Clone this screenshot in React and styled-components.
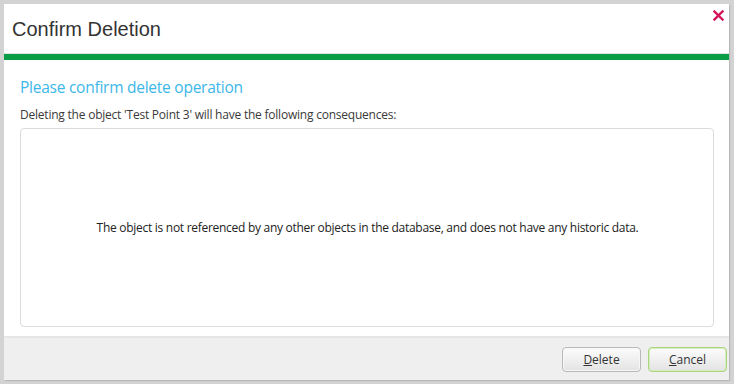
import React from "react";
import styled, { createGlobalStyle } from "styled-components";

const Global = createGlobalStyle`
  html, body { margin: 0; padding: 0; background: #d3d3d3; }
  body { width: 734px; height: 384px; overflow: hidden; }
  #root { padding: 4px 5px 4px 4px; box-sizing: border-box; height: 384px; }
`;

const Dialog = styled.div`
  height: 376px;
  background: #fff;
  display: flex;
  flex-direction: column;
  box-shadow: 1px 1px 1px rgba(0,0,0,0.12);
  font-family: "Open Sans", "Segoe UI", sans-serif;
`;

const Header = styled.div`
  position: relative;
  height: 49px;
  display: flex;
  align-items: center;
  padding-left: 8px;
  border-bottom: 1px solid #e3e3e3;
`;

const Title = styled.h1`
  margin: 0;
  font-family: "Liberation Sans", Arial, sans-serif;
  font-weight: normal;
  font-size: 20px;
  color: #333;
  padding-top: 2px;
`;

const Close = styled.button`
  position: absolute;
  top: 3px;
  right: 3px;
  width: 16px;
  height: 16px;
  padding: 0;
  border: none;
  background: none;
  display: flex;
  align-items: center;
  justify-content: center;
`;

const GreenBar = styled.div`
  height: 6px;
  background: #0b9d46;
`;

const Body = styled.div`
  flex: 1;
  display: flex;
  flex-direction: column;
  padding: 16px 15px 9px 16px;
`;

const Heading = styled.h2`
  margin: 0;
  font-weight: normal;
  font-size: 15.5px;
  line-height: 22px;
  color: #3cb7e9;
  letter-spacing: -0.25px;
`;

const Intro = styled.p`
  margin: 8px 0 5px;
  font-size: 12px;
  line-height: 17px;
  color: #3a3a3a;
  letter-spacing: -0.22px;
`;

const Consequences = styled.div`
  flex: 1;
  border: 1px solid #dcdcdc;
  border-radius: 4px;
  display: flex;
  align-items: center;
  justify-content: center;
`;

const Message = styled.p`
  margin: 0 0 0 1px;
  font-size: 12px;
  color: #222;
  letter-spacing: -0.28px;
`;

const Footer = styled.div`
  height: 44px;
  background: #efefef;
  border-top: 2px solid #e6e6e6;
  display: flex;
  align-items: center;
  justify-content: flex-end;
  gap: 7px;
  padding: 0 2px 1px 0;
  box-sizing: border-box;
`;

const Button = styled.button`
  width: 79px;
  height: 25px;
  border-radius: 4px;
  border: 1px solid ${(p) => (p.$primary ? "#a9d57b" : "#b9b9b9")};
  box-shadow: ${(p) => (p.$primary ? "inset 0 0 0 1px #d7edc0" : "inset 0 0 0 1px #f7f7f7")};
  background: linear-gradient(#fcfcfc, #e3e3e3);
  font-family: "Open Sans", "Segoe UI", sans-serif;
  font-size: 12px;
  color: #333;
  padding: 0;
  margin-top: 2px;
  u { text-decoration: underline; }
`;

export default function App() {
  return (
    <>
      <Global />
      <Dialog>
        <Header>
          <Title>Confirm Deletion</Title>
          <Close aria-label="Close">
            <svg width="11" height="11" viewBox="0 0 11 11">
              <path d="M1.5 1.5 L9.5 9.5 M9.5 1.5 L1.5 9.5" stroke="#d4145a" strokeWidth="2.4" strokeLinecap="square" />
            </svg>
          </Close>
        </Header>
        <GreenBar />
        <Body>
          <Heading>Please confirm delete operation</Heading>
          <Intro>Deleting the object 'Test Point 3' will have the following consequences:</Intro>
          <Consequences>
            <Message>
              The object is not referenced by any other objects in the database, and does not have any historic data.
            </Message>
          </Consequences>
        </Body>
        <Footer>
          <Button><u>D</u>elete</Button>
          <Button $primary><u>C</u>ancel</Button>
        </Footer>
      </Dialog>
    </>
  );
}
